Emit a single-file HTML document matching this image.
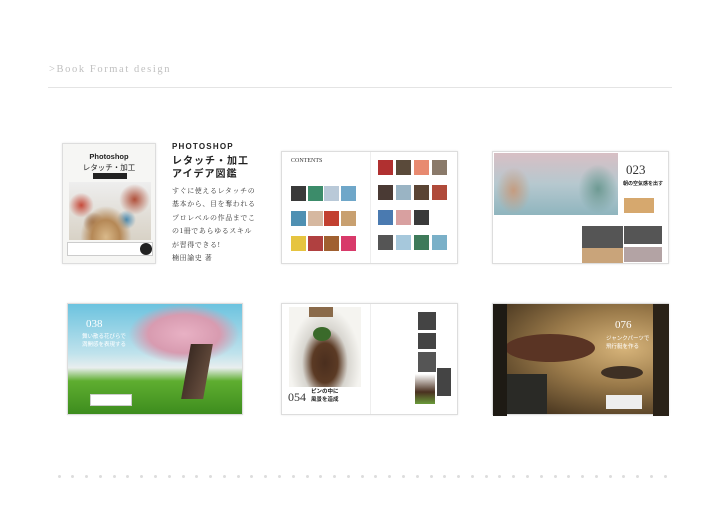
<!DOCTYPE html>
<html><head><meta charset="utf-8"><style>
*{margin:0;padding:0;box-sizing:border-box}
body{width:720px;height:513px;background:#fff;position:relative;overflow:hidden;font-family:"Liberation Sans","Noto Sans CJK JP",sans-serif}
.a{position:absolute}
.hd{left:49px;top:64px;font-family:"Liberation Serif",serif;font-size:10.5px;letter-spacing:1.6px;color:#c0c0c0}
.ln{left:48px;top:87px;width:624px;height:1px;background:#e4e4e4}
.pg{border:1px solid #ddd;background:#fff;box-shadow:0 0 2px rgba(0,0,0,.1)}
.th{position:absolute;width:15px;height:15px}
.dot{position:absolute;top:475px;width:3px;height:3px;border-radius:50%;background:#ddd}
.t{font-size:7px;line-height:13.4px;color:#333;font-family:"Liberation Serif","Noto Serif CJK SC",serif;letter-spacing:.6px}
</style></head><body>
<div class="a hd">&gt;Book Format design</div>
<div class="a ln"></div>

<!-- cover -->
<div class="a pg" style="left:62px;top:143px;width:94px;height:121px;background:#f6f6f4">
 <div class="a" style="left:0;top:8px;width:92px;text-align:center;font-size:7.5px;font-weight:bold;color:#222">Photoshop</div>
 <div class="a" style="left:0;top:18px;width:92px;text-align:center;font-size:7.5px;color:#222">レタッチ・加工</div>
 <div class="a" style="left:30px;top:29px;width:34px;height:6px;background:#222"></div>
 <div class="a" style="left:6px;top:38px;width:82px;height:58px;background:radial-gradient(ellipse at 45% 95%,#d9b98a 0,#b58856 22%,transparent 40%),radial-gradient(circle at 80% 30%,#b0503a 0,transparent 20%),radial-gradient(circle at 15% 40%,#c64a3a 0,transparent 16%),radial-gradient(circle at 30% 70%,#8a5a3a 0,transparent 15%),radial-gradient(circle at 70% 65%,#4a8ab0 0,transparent 14%),linear-gradient(#eee,#d8d2c6)"></div>
 <div class="a" style="left:4px;top:98px;width:86px;height:14px;background:#fff;border:1px solid #ccc"></div>
 <div class="a" style="left:77px;top:99px;width:12px;height:12px;border-radius:50%;background:#222"></div>
</div>
<div class="a" style="left:172px;top:142px;font-size:8px;font-weight:bold;letter-spacing:1.2px;color:#222">PHOTOSHOP</div>
<div class="a" style="left:172px;top:155px;font-size:10px;line-height:13px;letter-spacing:1px;color:#222;font-weight:bold">レタッチ・加工<br>アイデア図鑑</div>
<div class="a t" style="left:172px;top:185px">すぐに使えるレタッチの<br>基本から、目を奪われる<br>プロレベルの作品までこ<br>の1冊であらゆるスキル<br>が習得できる!<br>楠田諭史 著</div>

<!-- contents -->
<div class="a pg" style="left:281px;top:151px;width:177px;height:113px">
 <div class="a" style="left:9px;top:6px;font-family:'Liberation Serif',serif;font-size:6px;color:#333">CONTENTS</div>
 <div class="a" style="left:88px;top:0;width:1px;height:111px;background:#eee"></div>
 <div id="g1"></div>
</div>
<!-- 023 -->
<div class="a pg" style="left:492px;top:151px;width:177px;height:113px">
 <div class="a" style="left:1px;top:1px;width:124px;height:62px;background:linear-gradient(#d8bfc4,#b6c8cf 50%,#8fb5be)"></div>
 <div class="a" style="left:3px;top:15px;width:35px;height:47px;background:radial-gradient(ellipse,#c59c80,transparent 70%)"></div>
 <div class="a" style="left:85px;top:12px;width:40px;height:50px;background:radial-gradient(ellipse,#6e9a93,transparent 70%)"></div>
 <div class="a" style="left:133px;top:10px;font-family:'Liberation Serif',serif;font-size:13px;color:#333">023</div>
 <div class="a" style="left:130px;top:28px;font-size:5px;font-weight:bold;color:#222">朝の空気感を出す</div>
 <div class="a" style="left:131px;top:46px;width:30px;height:15px;background:#d6a86e"></div>
 <div class="a" style="left:89px;top:74px;width:41px;height:22px;background:#555"></div>
 <div class="a" style="left:89px;top:96px;width:41px;height:15px;background:#c9a47a"></div>
 <div class="a" style="left:131px;top:74px;width:38px;height:18px;background:#555"></div>
 <div class="a" style="left:131px;top:95px;width:38px;height:15px;background:#b3a3a4"></div>
</div>
<!-- 038 -->
<div class="a pg" style="left:67px;top:303px;width:176px;height:112px;background:linear-gradient(#6cc3df 0,#bfe2ec 45%,#e9eeee 58%,#5fae30 70%,#3d8d1e 100%)">
 <div class="a" style="left:60px;top:0;width:112px;height:60px;background:radial-gradient(ellipse,#e8b1c4 0,#d89bb0 45%,transparent 70%)"></div>
 <div class="a" style="left:118px;top:40px;width:22px;height:55px;background:linear-gradient(100deg,#3a2a22,#6a5040);transform:skewX(-10deg)"></div>
 <div class="a" style="left:18px;top:14px;font-family:'Liberation Serif',serif;font-size:11px;color:#fff">038</div>
 <div class="a" style="left:14px;top:29px;font-size:5.5px;color:#fff;line-height:8px">舞い散る花びらで<br>満開感を表現する</div>
 <div class="a" style="left:22px;top:90px;width:42px;height:12px;background:#fff;border:1px solid #ccc"></div>
</div>
<!-- 054 -->
<div class="a pg" style="left:281px;top:303px;width:177px;height:112px">
 <div class="a" style="left:7px;top:3px;width:72px;height:80px;background:radial-gradient(ellipse at 50% 70%,#4a2e1e 0,#5b3a24 25%,#d8d6d0 45%,#f5f4f0 70%)"></div>
 <div class="a" style="left:27px;top:3px;width:24px;height:10px;background:#8a6a4a"></div>
 <div class="a" style="left:31px;top:23px;width:18px;height:14px;background:#3a6a2a;border-radius:50%"></div>
 <div class="a" style="left:6px;top:86px;font-family:'Liberation Serif',serif;font-size:12px;color:#333">054</div>
 <div class="a" style="left:29px;top:84px;font-size:5.5px;font-weight:bold;line-height:8px;color:#222">ピンの中に<br>風景を造成</div>
 <div class="a" style="left:88px;top:0;width:1px;height:110px;background:#eee"></div>
 <div class="a" style="left:136px;top:8px;width:18px;height:60px;background:linear-gradient(#444 0 30%,#fff 30% 35%,#444 35% 62%,#fff 62% 67%,#555 67%)"></div>
 <div class="a" style="left:155px;top:64px;width:14px;height:28px;background:#444"></div>
 <div class="a" style="left:133px;top:70px;width:20px;height:30px;background:linear-gradient(#fff,#4a3020 60%,#6a9a3a)"></div>
</div>
<!-- 076 -->
<div class="a pg" style="left:492px;top:303px;width:177px;height:112px;background:radial-gradient(ellipse at 75% 40%,#d7b47a 0,#9a7a4a 40%,#3a2a18 90%)">
 <div class="a" style="left:12px;top:30px;width:90px;height:28px;border-radius:50%;background:#5a3424"></div>
 <div class="a" style="left:108px;top:62px;width:42px;height:13px;border-radius:50%;background:#3e3024"></div>
 <div class="a" style="left:0;top:0;width:14px;height:112px;background:#1e1a14"></div>
 <div class="a" style="left:160px;top:0;width:16px;height:112px;background:#2a2218"></div>
 <div class="a" style="left:14px;top:70px;width:40px;height:40px;background:#2a2a26"></div>
 <div class="a" style="left:122px;top:15px;font-family:'Liberation Serif',serif;font-size:11px;color:#fff">076</div>
 <div class="a" style="left:113px;top:31px;font-size:5.5px;color:#fff;line-height:8px">ジャンクパーツで<br>飛行艇を作る</div>
 <div class="a" style="left:113px;top:91px;width:36px;height:14px;background:#eee"></div>
</div>
<div id="dots"></div>
<script>
var d='';for(var i=0;i<45;i++)d+='<div class="dot" style="left:'+(57.5+i*13.78)+'px"></div>';document.getElementById('dots').innerHTML=d;
var cols=['#3a3a3a','#3c8c6a','#b9c9d8','#6fa7c9','#4f90b2','#d6b8a0','#c24030','#c8a070','#e6c440','#b04040','#a06030','#d83a6a'];
var g='';
for(var r=0;r<3;r++)for(var c=0;c<4;c++){g+='<div class="th" style="left:'+(9+c*16.5)+'px;top:'+(34+r*25)+'px;background:'+cols[r*4+c]+'"></div>';}
var c2=['#b03030','#5a4a3a','#e88a70','#8a7a6a','#4a3a34','#9ab4c4','#5a4434','#b04a3a','#4a7ab0','#d8a0a0','#3a3a3a','#fff','#555','#a6c8dc','#3e7a5a','#7ab0c8'];
for(var r=0;r<4;r++)for(var c=0;c<4;c++){g+='<div class="th" style="left:'+(96+c*18)+'px;top:'+(8+r*25)+'px;background:'+c2[r*4+c]+'"></div>';}
document.getElementById('g1').innerHTML=g;
</script>
</body></html>
